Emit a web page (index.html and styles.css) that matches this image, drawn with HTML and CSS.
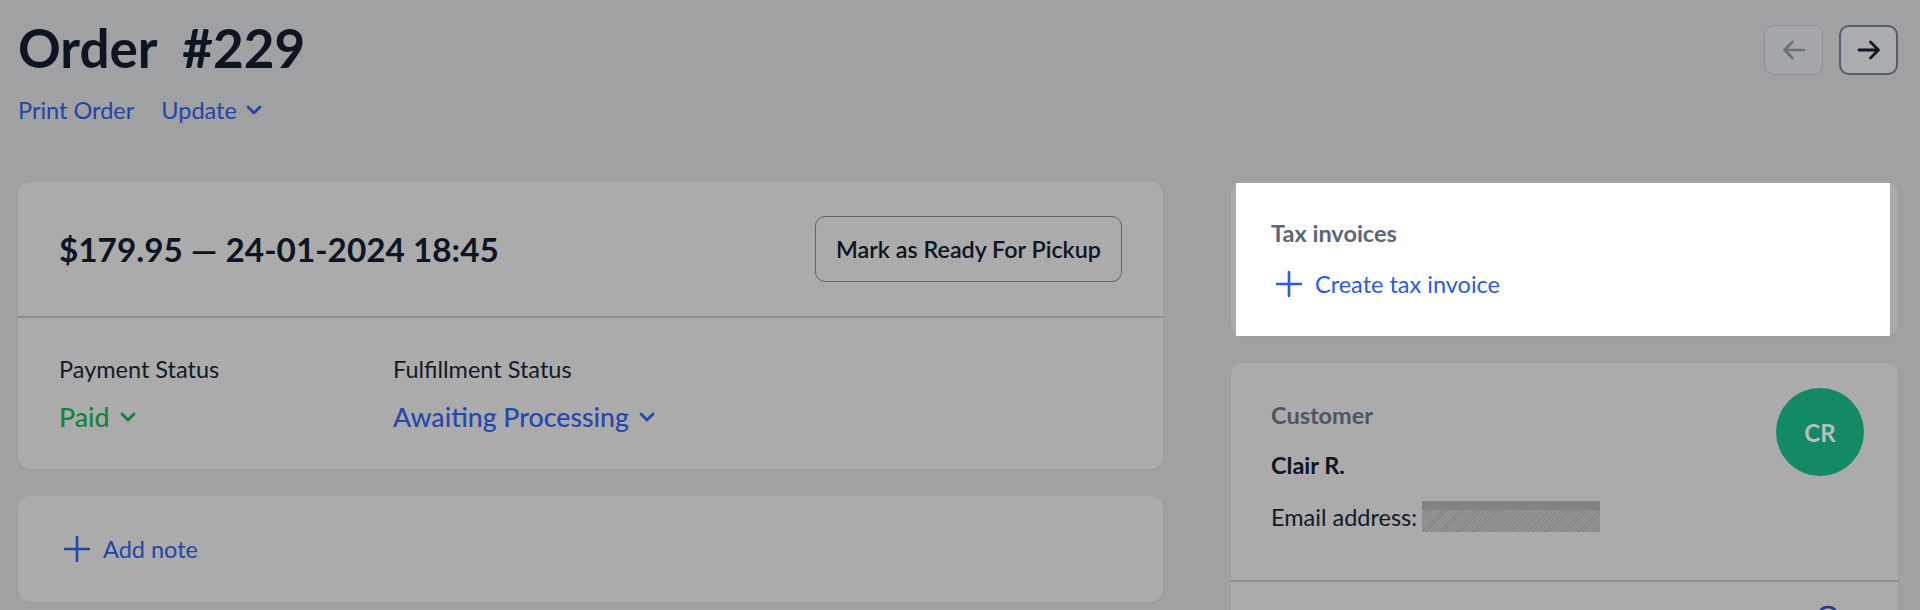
FILE: index.html
```html
<!DOCTYPE html>
<html lang="en">
<head>
<meta charset="utf-8">
<title>Order #229</title>
<link rel="stylesheet" href="styles.css">
</head>
<body>
<div class="page">
  <header class="top">
    <div class="title-block">
      <h1 class="title">Order&nbsp; #229</h1>
      <div class="links">
        <a class="link">Print Order</a>
        <a class="link">Update
          <svg class="chev" width="16" height="10" viewBox="0 0 16 10"><path d="M2 2l6 6 6-6" fill="none" stroke="currentColor" stroke-width="2.8" stroke-linecap="round" stroke-linejoin="round"/></svg>
        </a>
      </div>
    </div>
    <div class="nav">
      <button class="nav-btn disabled" aria-label="Previous">
        <svg width="26" height="26" viewBox="0 0 26 26"><path d="M23 13H3.5M11.5 5l-8 8 8 8" fill="none" stroke="currentColor" stroke-width="2.6" stroke-linecap="round" stroke-linejoin="round"/></svg>
      </button>
      <button class="nav-btn" aria-label="Next">
        <svg width="26" height="26" viewBox="0 0 26 26"><path d="M3 13h19.5M14.5 5l8 8-8 8" fill="none" stroke="currentColor" stroke-width="2.8" stroke-linecap="round" stroke-linejoin="round"/></svg>
      </button>
    </div>
  </header>

  <main class="grid">
    <div class="col">
      <section class="card">
        <div class="card-head">
          <h2 class="amount">$179.95 — 24-01-2024 18:45</h2>
          <button class="btn">Mark as Ready For Pickup</button>
        </div>
        <div class="statuses">
          <div class="status">
            <div class="label">Payment Status</div>
            <div class="value green">Paid
              <svg width="16" height="10" viewBox="0 0 16 10"><path d="M2 2l6 6 6-6" fill="none" stroke="currentColor" stroke-width="2.8" stroke-linecap="round" stroke-linejoin="round"/></svg>
            </div>
          </div>
          <div class="status">
            <div class="label">Fulfillment Status</div>
            <div class="value blue">Awaiting Processing
              <svg width="16" height="10" viewBox="0 0 16 10"><path d="M2 2l6 6 6-6" fill="none" stroke="currentColor" stroke-width="2.8" stroke-linecap="round" stroke-linejoin="round"/></svg>
            </div>
          </div>
        </div>
      </section>

      <section class="card note">
        <svg class="plus" width="26" height="26" viewBox="0 0 26 26"><path d="M13 1v24M1 13h24" fill="none" stroke="currentColor" stroke-width="2.6" stroke-linecap="round"/></svg>
        <span>Add note</span>
      </section>
    </div>

    <div class="col">
      <section class="card tax">
        <div class="spot">
          <div class="tax-title">Tax invoices</div>
          <a class="create">
            <svg width="26" height="26" viewBox="0 0 26 26"><path d="M13 1v24M1 13h24" fill="none" stroke="currentColor" stroke-width="2.6" stroke-linecap="round"/></svg>
            <span>Create tax invoice</span>
          </a>
        </div>
      </section>

      <section class="card customer">
        <div class="cust-body">
          <div class="cust-info">
            <div class="cust-label">Customer</div>
            <div class="cust-name">Clair R.</div>
            <div class="cust-email"><span>Email address:</span><span class="redact"></span></div>
          </div>
          <div class="avatar">CR</div>
        </div>
        <div class="cust-foot">
          <svg width="24" height="24" viewBox="0 0 24 24"><circle cx="12" cy="12" r="10" fill="none" stroke="#21358f" stroke-width="2.4"/></svg>
        </div>
      </section>
    </div>
  </main>
</div>
</body>
</html>
```

FILE: styles.css
```css
* { box-sizing: border-box; }

html, body {
  margin: 0;
  background: #a0a1a3;
  font-family: Lato, "Noto Sans", "Liberation Sans", sans-serif;
  color: #0d1422;
}

.page {
  padding: 16px 22px 0 18px;
  height: 610px;
  overflow: hidden;
}

.top {
  display: flex;
  justify-content: space-between;
  align-items: flex-start;
}

.title {
  margin: 0;
  font-size: 53px;
  line-height: 64px;
  font-weight: 700;
  color: #0d1422;
}

.links {
  display: flex;
  gap: 27px;
  margin-top: 16px;
  font-size: 23.5px;
  line-height: 28px;
  color: #2445a8;
}

.link {
  display: flex;
  align-items: center;
  gap: 9px;
}

.nav {
  display: flex;
  gap: 16px;
  margin-top: 9px;
}

.nav-btn {
  width: 59px;
  height: 50px;
  border-radius: 10px;
  border: 2px solid #565c6a;
  background: #abacae;
  color: #0f1624;
  display: flex;
  align-items: center;
  justify-content: center;
  padding: 0;
}

.nav-btn.disabled {
  border: 1.5px solid #8e9196;
  background: #a6a7a9;
  color: #6b7078;
}

.grid {
  display: grid;
  grid-template-columns: 1145px 667px;
  column-gap: 68px;
  margin-top: 58px;
  align-items: start;
}

.col {
  display: flex;
  flex-direction: column;
  gap: 27px;
}

.card {
  background: #ababab;
  border-radius: 12px;
  box-shadow: 0 1px 3px rgba(0, 0, 0, 0.06);
}

.card-head {
  display: flex;
  justify-content: space-between;
  align-items: center;
  padding: 34px 41px;
  border-bottom: 2px solid #8f8f8f;
}

.amount {
  margin: 0;
  font-size: 33.3px;
  line-height: 40px;
  font-weight: 700;
}

.btn {
  height: 66px;
  padding: 0 20px;
  border: 1.5px solid #5d6370;
  border-radius: 10px;
  background: transparent;
  font-family: inherit;
  font-size: 23.3px;
  font-weight: 600;
  color: #0d1422;
}

.statuses {
  display: grid;
  grid-template-columns: 334px auto;
  padding: 37px 41px 36px;
}

.label {
  font-size: 23.5px;
  line-height: 28px;
  margin-bottom: 18px;
  color: #121a28;
}

.value {
  display: flex;
  align-items: center;
  gap: 10px;
  font-size: 26.7px;
  line-height: 32px;
  font-weight: 500;
}

.value.green { color: #17803a; }
.value.blue { color: #2646ad; }

.note {
  height: 106px;
  display: flex;
  align-items: center;
  gap: 13px;
  padding: 0 46px;
  color: #2445a8;
  font-size: 23.5px;
  line-height: 28px;
}

.tax {
  height: 154px;
  padding-top: 1px;
}

.spot {
  background: #ffffff;
  margin: 0 8px 0 5px;
  height: 153px;
  padding: 36px 30px 0 35px;
}

.tax-title {
  font-size: 23.5px;
  line-height: 28px;
  font-weight: 700;
  color: #5d6679;
  margin-bottom: 23px;
}

.create {
  display: flex;
  align-items: center;
  gap: 13px;
  padding-left: 5px;
  font-size: 23.5px;
  line-height: 28px;
  color: #2a5ae0;
}

.cust-body {
  display: flex;
  justify-content: space-between;
  align-items: flex-start;
  padding: 25px 34px 48px 40px;
  border-bottom: 2px solid #8f8f8f;
}

.cust-info {
  padding-top: 13px;
}

.cust-label {
  font-size: 23.5px;
  line-height: 28px;
  font-weight: 700;
  color: #4e5563;
  margin-bottom: 22px;
}

.cust-name {
  font-size: 23.5px;
  line-height: 28px;
  font-weight: 700;
  color: #0d1422;
  margin-bottom: 22px;
}

.cust-email {
  display: flex;
  align-items: center;
  gap: 5px;
  height: 31px;
  font-size: 23.5px;
  line-height: 28px;
  color: #121a28;
}

.redact {
  display: block;
  width: 178px;
  height: 31px;
  background:
    linear-gradient(#828282 0 9px, transparent 9px),
    repeating-linear-gradient(135deg, #868686 0 1px, #939393 1px 3px);
}

.avatar {
  width: 88px;
  height: 88px;
  border-radius: 50%;
  background: #138a65;
  color: #b9bdbe;
  font-size: 24px;
  font-weight: 700;
  display: flex;
  align-items: center;
  justify-content: center;
}

.cust-foot {
  display: flex;
  justify-content: flex-end;
  padding: 23px 58px 20px 40px;
}
```
